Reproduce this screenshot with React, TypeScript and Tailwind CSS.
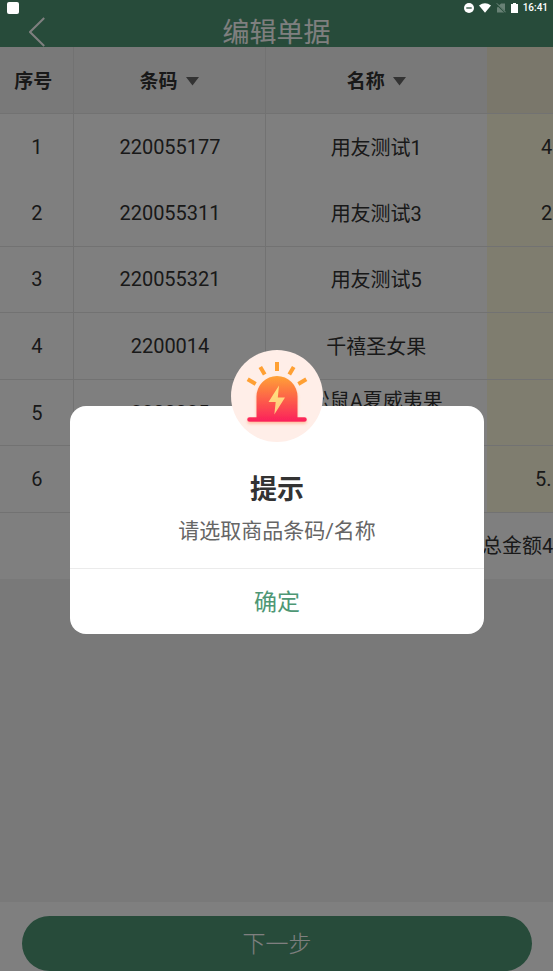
import type { ReactNode } from "react";

const rows = [
  { code: "220055177", name: "用友测试1", amount: "4", pad: "pl-[54px]" },
  { code: "220055311", name: "用友测试3", amount: "2", pad: "pl-[54px]" },
  { code: "220055321", name: "用友测试5", amount: "", pad: "" },
  { code: "2200014", name: "千禧圣女果", amount: "", pad: "" },
  { code: "2200025", name: "松鼠A夏威夷果\n仁", amount: "", pad: "" },
  { code: "2200031", name: "水蜜桃", amount: "5.", pad: "pl-12" },
];

function StatusBar() {
  return (
    <div className="absolute inset-x-0 top-0 z-20 flex h-[15px] items-center justify-between pl-[7px] pr-[5px] text-white">
      <span className="h-3 w-3 rounded-[2px] bg-white" />
      <div className="flex items-center gap-[5px]">
        <svg viewBox="0 0 10 10" className="h-[10px] w-[10px]">
          <circle cx="5" cy="5" r="5" fill="#fff" />
          <path d="M2.3 5h5.4" stroke="#274c3a" strokeWidth="1.3" />
        </svg>
        <svg viewBox="0 0 12 10" className="h-[10px] w-3">
          <path d="M0 2.4Q6-2 12 2.4L6 9.8z" fill="#fff" />
        </svg>
        <svg viewBox="0 0 10 10" className="h-[10px] w-[10px]">
          <path d="M9 .5v9H1V4.5l4-4z" fill="#fff" opacity=".3" />
          <path d="M.5 1l9 8.5" stroke="#274c3a" strokeWidth="1.8" />
          <path d="M.8.3l8.9 9" stroke="#fff" strokeWidth=".9" opacity=".4" />
        </svg>
        <svg viewBox="0 0 7 10" className="h-[10px] w-[7px]">
          <path d="M2 0h3v1h2v9H0V1h2z" fill="#fff" />
        </svg>
        <span className="text-[10px] font-medium leading-none">16:41</span>
      </div>
    </div>
  );
}

function SortHeader({ children }: { children: ReactNode }) {
  return (
    <button type="button" className="inline-flex items-center gap-2 font-bold">
      {children}
      <svg viewBox="0 0 13 9" className="h-[9px] w-[13px]">
        <path d="M0 0h13L6.5 8.5z" fill="#666" />
      </svg>
    </button>
  );
}

function AlarmIcon() {
  return (
    <svg viewBox="0 0 92 92" className="h-[92px] w-[92px]" aria-hidden="true">
      <defs>
        <linearGradient id="lamp" x1="0" y1="0" x2="0" y2="1">
          <stop offset="0" stopColor="#ffa236" />
          <stop offset="1" stopColor="#fb1f5c" />
        </linearGradient>
        <linearGradient id="bolt" x1="0" y1="0" x2="0" y2="1">
          <stop offset="0" stopColor="#ffe680" />
          <stop offset="1" stopColor="#ffc57c" />
        </linearGradient>
        <filter id="glow" x="-20%" y="-20%" width="140%" height="150%">
          <feDropShadow dx="0" dy="2" stdDeviation="1.6" floodColor="#ff8a4c" floodOpacity=".45" />
        </filter>
      </defs>
      <circle cx="46" cy="46" r="46" fill="#ffeee8" />
      <g stroke="#ffa033" strokeWidth="4">
        <path d="M46 12v9" />
        <path d="M29.3 17l4.4 7.6" />
        <path d="M62.7 17l-4.4 7.6" />
        <path d="M16.7 29.3l8 4.6" />
        <path d="M75.3 29.3l-8 4.6" />
      </g>
      <g filter="url(#glow)">
        <path
          d="M25.5 67.2V46.5a20.5 20.5 0 0 1 41 0v20.7h7a2.3 2.3 0 0 1 0 4.6h-55a2.3 2.3 0 0 1 0-4.6z"
          fill="url(#lamp)"
        />
      </g>
      <path d="M48 35.5L37.5 52h7.2l-1.4 12.5L54 47.5h-7.2z" fill="url(#bolt)" />
    </svg>
  );
}

function PromptDialog() {
  return (
    <div className="absolute inset-0 z-10 flex items-center justify-center bg-black/50 pl-[70px] pr-[69px] pt-[69px]">
      <div
        role="alertdialog"
        aria-labelledby="prompt-title"
        aria-describedby="prompt-text"
        className="relative w-full rounded-2xl bg-white pt-16 text-center"
      >
        <div className="absolute inset-x-0 -top-14 flex justify-center">
          <AlarmIcon />
        </div>
        <h2 id="prompt-title" className="text-[27px] font-bold leading-10 text-[#333]">
          提示
        </h2>
        <p id="prompt-text" className="mt-1 pb-5 text-[21px] leading-[34px] text-[#666]">
          请选取商品条码/名称
        </p>
        <button
          type="button"
          className="h-[66px] w-full border-t border-[#ebebeb] pt-[3px] text-[23px] text-[#4e9775]"
        >
          确定
        </button>
      </div>
    </div>
  );
}

export default function App() {
  return (
    <div className="relative flex min-h-screen flex-col overflow-hidden bg-[#f3f3f3] font-[Roboto,'Noto_Sans_CJK_SC',sans-serif] text-[#333]">
      <StatusBar />

      <header className="grid h-[47px] grid-cols-[74px_1fr_74px] items-end bg-[#4e9775] text-white">
        <button type="button" aria-label="返回" className="flex justify-center">
          <svg viewBox="0 0 16 30" className="h-[30px] w-4" fill="none" stroke="#fff" strokeWidth="2">
            <path d="M15.2 1L1 15l14.2 14" />
          </svg>
        </button>
        <h1 className="text-center text-[27px] leading-7">编辑单据</h1>
      </header>

      <main className="flex-1 overflow-hidden">
        <table className="h-[532px] w-[620px] table-fixed border-collapse bg-white text-center text-[20px] leading-[26px]">
          <colgroup>
            <col className="w-[73px]" />
            <col className="w-[192px]" />
            <col className="w-[222px]" />
            <col />
          </colgroup>
          <thead>
            <tr className="h-[66px] border-b border-[#e4e4e4] bg-[#f3f3f3] text-[19px]">
              <th className="border-r border-[#e4e4e4] pr-[6px] pt-1 font-bold">序号</th>
              <th className="border-r border-[#e4e4e4] pt-1">
                <SortHeader>条码</SortHeader>
              </th>
              <th className="pt-1">
                <SortHeader>名称</SortHeader>
              </th>
              <th className="bg-[#f5efd7]" />
            </tr>
          </thead>
          <tbody>
            {rows.map((row, i) => (
              <tr key={row.code} className={i === 0 ? "h-[66px]" : "h-[66px] border-b border-[#e4e4e4]"}>
                <td className="border-r border-[#e4e4e4] pl-px">{i + 1}</td>
                <td className="border-r border-[#e4e4e4] pl-[2px]">{row.code}</td>
                <td className="whitespace-pre-line pt-[2px]">{row.name}</td>
                <td className={`bg-[#fffadf] text-left ${row.pad}`}>{row.amount}</td>
              </tr>
            ))}
            <tr className="h-[66px]">
              <td colSpan={2} />
              <td colSpan={2} className="pl-[217px] text-left">
                总金额4
              </td>
            </tr>
          </tbody>
        </table>
      </main>

      <footer className="bg-white pl-[22px] pr-[21px] pt-[14px]">
        <button type="button" className="h-[55px] w-full rounded-full bg-[#4e9775] pt-[3px] text-[23px] font-light text-white">
          下一步
        </button>
      </footer>

      <PromptDialog />
    </div>
  );
}
